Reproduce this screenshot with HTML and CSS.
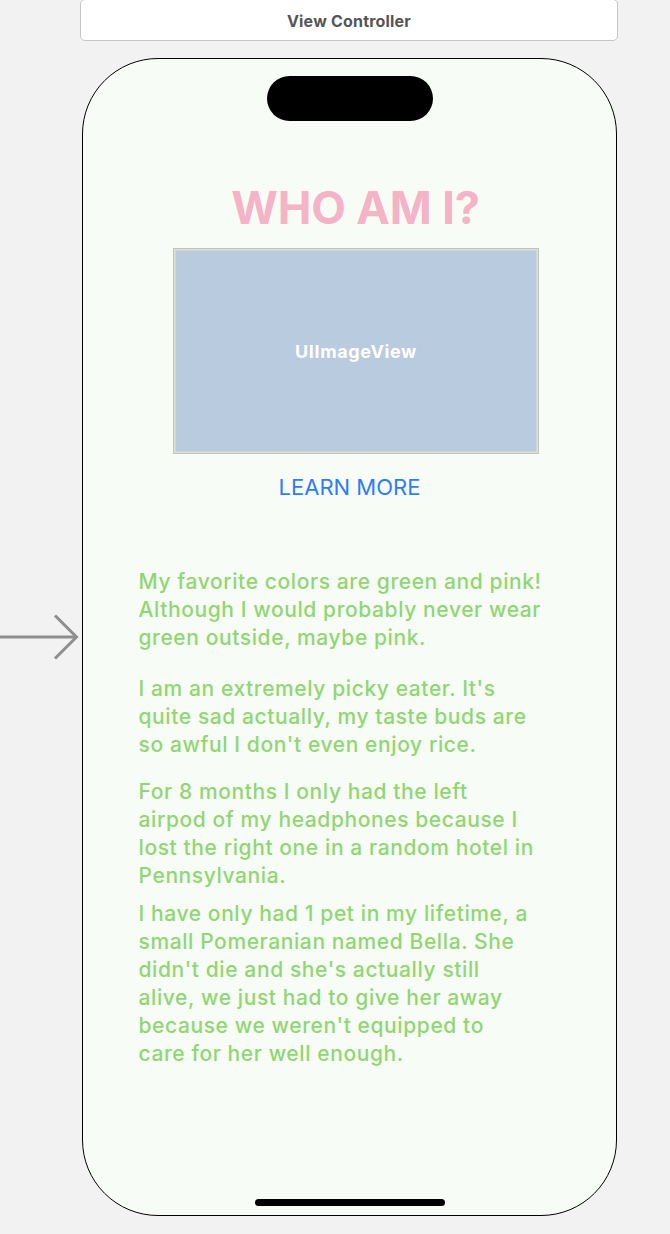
FILE: index.html
```html
<!DOCTYPE html>
<html>
<head>
<meta charset="utf-8">
<link rel="stylesheet" href="styles.css">
</head>
<body>
<div class="canvas">
  <div class="scene-bar">View Controller</div>
  <svg class="entry-arrow" width="80" height="50" viewBox="0 0 80 50">
    <path d="M0 24 H76" stroke="#8e8e8e" stroke-width="3" fill="none"/>
    <path d="M55 2.5 L76.5 24 L55 45.5" stroke="#8e8e8e" stroke-width="3" fill="none"/>
  </svg>
  <div class="phone">
    <div class="island"></div>
    <h1 class="title">WHO AM I?</h1>
    <div class="image-view"><span>UIImageView</span></div>
    <div class="learn">LEARN MORE</div>
    <div class="facts">
      <p class="fact f1">My favorite colors are green and pink!<br>Although I would probably never wear<br>green outside, maybe pink.</p>
      <p class="fact f2">I am an extremely picky eater. It's<br>quite sad actually, my taste buds are<br>so awful I don't even enjoy rice.</p>
      <p class="fact f3">For 8 months I only had the left<br>airpod of my headphones because I<br>lost the right one in a random hotel in<br>Pennsylvania.</p>
      <p class="fact f4">I have only had 1 pet in my lifetime, a<br>small Pomeranian named Bella. She<br>didn't die and she's actually still<br>alive, we just had to give her away<br>because we weren't equipped to<br>care for her well enough.</p>
    </div>
    <div class="home-indicator"></div>
  </div>
</div>
</body>
</html>
```

FILE: styles.css
```css
html, body {
  margin: 0;
  padding: 0;
  background: #f2f2f2;
}
.canvas {
  position: relative;
  width: 670px;
  height: 1234px;
  overflow: hidden;
  font-family: Inter, "Liberation Sans", sans-serif;
}
.scene-bar {
  box-sizing: border-box;
  margin-left: 80px;
  width: 538px;
  height: 42px;
  margin-top: -1px;
  background: #ffffff;
  border: 1px solid #c6c6c6;
  border-radius: 5px;
  display: flex;
  align-items: center;
  justify-content: center;
  font-size: 16px;
  letter-spacing: 0.2px;
  font-weight: 700;
  color: #555555;
  padding-top: 1px;
}
.entry-arrow {
  position: absolute;
  left: 0;
  top: 613px;
}
.phone {
  box-sizing: border-box;
  margin-left: 82px;
  margin-top: 17px;
  width: 535px;
  height: 1158px;
  background: #f8fcf6;
  border: 1.5px solid #000;
  border-radius: 76px;
  display: flex;
  flex-direction: column;
  align-items: center;
}
.island {
  margin-top: 16.5px;
  width: 166px;
  height: 45px;
  border-radius: 23px;
  background: #000;
  flex: none;
}
.title {
  margin: 60.5px 0 0 12px;
  font-size: 45px;
  line-height: 54px;
  font-weight: 700;
  color: #f4b3c7;
  letter-spacing: -0.1px;
}
.image-view {
  box-sizing: border-box;
  margin: 12.7px 0 0 13px;
  width: 366px;
  height: 206px;
  background: #b9cbdf;
  border: 1px solid #c0c4b9;
  box-shadow: inset 0 0 0 1.5px #dce1d6;
  display: flex;
  align-items: center;
  justify-content: center;
  flex: none;
}
.image-view span {
  color: #ffffff;
  font-weight: 700;
  font-size: 18px;
  letter-spacing: 0.6px;
  margin-top: 2px;
}
.learn {
  margin-top: 20.7px;
  font-size: 22px;
  line-height: 26px;
  color: #2f7cf6;
  font-weight: 400;
}
.facts {
  align-self: stretch;
  padding-left: 55.5px;
  margin-top: 67.5px;
}
.fact {
  margin: 0;
  font-size: 21px;
  letter-spacing: 0.6px;
  line-height: 28px;
  font-weight: 550;
  color: #90d672;
  white-space: nowrap;
}
.f2 { margin-top: 22.7px; }
.f3 { margin-top: 19.3px; }
.f4 { margin-top: 9.7px; }
.home-indicator {
  margin-top: auto;
  margin-bottom: 9.5px;
  width: 190px;
  height: 7px;
  border-radius: 4px;
  background: #000;
  flex: none;
}
```
